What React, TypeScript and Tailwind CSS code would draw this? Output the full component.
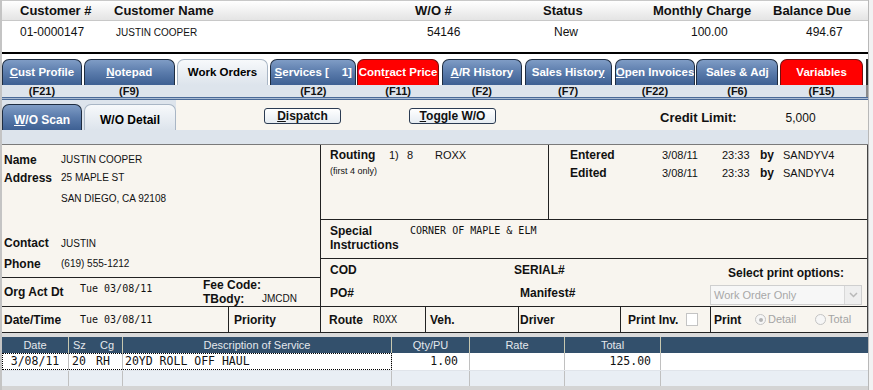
import React from 'react';

const blueTab = 'bg-linear-to-b from-[#7f9cc5] via-[#5a7bab] to-[#3e6093] border-[#1e2c40] text-white';
const redTab = 'bg-[#ff0000] border-[#701010] text-white';
const activeTab = 'bg-linear-to-b from-[#f7f9fb] to-[#dde4ec] border-[#a9b6c5] text-black';

const tabs = [
  { key: 'cust', label: <><u>C</u>ust Profile</>, f: '(F21)', pos: 'ml-0 w-[80px]', tone: blueTab },
  { key: 'note', label: <><u>N</u>otepad</>, f: '(F9)', pos: 'ml-[2px] w-[91px]', tone: blueTab },
  { key: 'wo', label: 'Work Orders', f: '', pos: 'ml-[2px] w-[92px]', tone: activeTab },
  { key: 'svc', label: <><u>S</u>ervices [&nbsp;&nbsp;&nbsp;&nbsp;1]</>, f: '(F12)', pos: 'ml-[2px] w-[86px]', tone: blueTab },
  { key: 'contract', label: <>Cont<u>r</u>act Price</>, f: '(F11)', pos: 'ml-px w-[82px]', tone: redTab },
  { key: 'ar', label: <><u>A</u>/R History</>, f: '(F2)', pos: 'ml-[3px] w-[80px]', tone: blueTab },
  { key: 'sh', label: <>Sales Histor<u>y</u></>, f: '(F7)', pos: 'ml-[3px] w-[87px]', tone: blueTab },
  { key: 'oi', label: <><u>O</u>pen Invoices</>, f: '(F22)', pos: 'ml-[3px] w-[81px]', tone: blueTab },
  { key: 'sa', label: <>Sales &amp; Ad<u>j</u></>, f: '(F6)', pos: 'ml-px w-[82px]', tone: blueTab },
  { key: 'var', label: 'Variables', f: '(F15)', pos: 'ml-[2px] w-[83px]', tone: redTab },
];

const mono = "font-['DejaVu_Sans_Mono',monospace]";

function Radio({ checked }: { checked?: boolean }) {
  return (
    <span className="w-[11px] h-[11px] rounded-full border border-[#c4c4c4] bg-[#f6f6f6] flex items-center justify-center">
      {checked && <span className="w-[4px] h-[4px] rounded-full bg-[#b4b4b4]" />}
    </span>
  );
}

export default function App() {
  return (
    <div className="w-[873px] h-[390px] overflow-hidden flex bg-white text-[#111] font-['Liberation_Sans',Arial,sans-serif]">
      <div className="w-[2px] bg-[#c4c4c4]" />
      <div className="w-[866px] flex flex-col">
        {/* customer header */}
        <div className="h-[21px] border-t border-b border-[#c8c8c8] bg-linear-to-b from-white to-[#e4e4e4] flex items-center pl-[18px] text-[13px] font-bold">
          <span className="w-[94px]">Customer #</span>
          <span className="w-[301px]">Customer Name</span>
          <span className="w-[128px]">W/O #</span>
          <span className="w-[110px]">Status</span>
          <span className="w-[120px]">Monthly Charge</span>
          <span>Balance Due</span>
        </div>
        <div className="h-[31px] pt-[4px] pl-[18px]">
          <div className="h-[14px] flex items-center text-[12px]">
            <span className="w-[96px]">01-0000147</span>
            <span className="w-[311px] text-[10px]">JUSTIN COOPER</span>
            <span className="w-[127px]">54146</span>
            <span className="w-[137px]">New</span>
            <span className="w-[115px]">100.00</span>
            <span>494.67</span>
          </div>
        </div>
        <div className="h-[2px] bg-black" />
        <div className="h-[5px]" />

        {/* main tabs */}
        <div className="h-[26px] flex">
          {tabs.map((t) => (
            <div
              key={t.key}
              className={`${t.pos} ${t.tone} border border-b-0 rounded-t-[7px] flex items-center justify-center text-[11.5px] font-bold whitespace-nowrap overflow-hidden`}
            >
              {t.label}
            </div>
          ))}
          <div className="ml-[3px] w-[2px] bg-[#2a2a2a]" />
        </div>
        <div className="h-[12px] flex bg-[#dde4ec]">
          {tabs.map((t) => (
            <div key={t.key} className={`${t.pos} flex items-center justify-center text-[11px] font-bold leading-[12px]`}>
              {t.f}
            </div>
          ))}
          <div className="ml-[3px] w-[2px] bg-[#8a8a8a]" />
        </div>
        <div className="h-px bg-[#4a6a98]" />
        <div className="h-px bg-[#a9bbd3]" />
        <div className="h-px bg-[#4a6a98]" />

        {/* sub tabs */}
        <div className="h-[30px] flex">
          <div className="w-[174px] bg-[#dde4ec] flex items-end">
            <div className={`w-[80px] h-[26px] ${blueTab} border border-b-0 rounded-t-[7px] flex items-center justify-center pt-[4px] text-[12px] font-bold`}>
              <span><u>W</u>/O Scan</span>
            </div>
            <div className={`ml-[2px] w-[92px] h-[26px] ${activeTab} border border-b-0 rounded-t-[7px] flex items-center justify-center pt-[4px] text-[12px] font-bold`}>
              W/O Detail
            </div>
          </div>
          <div className="flex-1 bg-[#f8f5ef] flex items-center pt-[2px] pl-[88px]">
            <button className="w-[77px] h-[16px] rounded-[3px] border border-[#2b3b52] bg-linear-to-b from-white to-[#e6ecf2] text-[12px] font-bold leading-none">
              <u>D</u>ispatch
            </button>
            <button className="ml-[68px] w-[87px] h-[16px] rounded-[3px] border border-[#2b3b52] bg-linear-to-b from-white to-[#e6ecf2] text-[12px] font-bold leading-none">
              <u>T</u>oggle W/O
            </button>
            <span className="ml-[164px] mt-[4px] text-[13px] font-bold">Credit Limit:</span>
            <span className="ml-[49px] mt-[4px] text-[12px]">5,000</span>
          </div>
        </div>
        <div className="h-[14px] bg-[#dde4ec]" />
        <div className="h-px bg-[#7a7a7a]" />

        {/* detail body */}
        <div className="bg-[#f8f5ef] border-r border-[#444]">
          <div className="h-[162px] border-b border-[#222] flex">
            <div className="w-[319px] border-r border-[#222] flex flex-col">
              <div className="h-[133px] border-b border-[#222] pl-[2px] pt-[6px] flex flex-col">
                <div className="h-[17px] flex items-center">
                  <span className="w-[57px] text-[12px] font-bold">Name</span>
                  <span className="text-[10px]">JUSTIN COOPER</span>
                </div>
                <div className="h-[19px] flex items-center">
                  <span className="w-[57px] text-[12px] font-bold">Address</span>
                  <span className="text-[10px]">25 MAPLE ST</span>
                </div>
                <div className="h-[23px] flex items-center pl-[57px] text-[10px]">SAN DIEGO, CA 92108</div>
                <div className="h-[23px]" />
                <div className="h-[20px] flex items-center">
                  <span className="w-[57px] text-[12px] font-bold">Contact</span>
                  <span className="text-[10px]">JUSTIN</span>
                </div>
                <div className="h-[21px] flex items-center">
                  <span className="w-[57px] text-[12px] font-bold">Phone</span>
                  <span className="text-[10px]">(619) 555-1212</span>
                </div>
              </div>
              <div className="flex-1 flex items-start pl-[2px] leading-[14px]">
                <span className="w-[76px] mt-[7px] text-[12px] font-bold">Org Act Dt</span>
                <span className={`w-[123px] mt-[4px] text-[10px] ${mono}`}>Tue 03/08/11</span>
                <div className="flex flex-col text-[12px] font-bold">
                  <span>Fee Code:</span>
                  <span className="flex items-center">
                    <span className="w-[59px]">TBody:</span>
                    <span className="text-[10px] font-normal">JMCDN</span>
                  </span>
                </div>
              </div>
            </div>

            <div className="flex-1 flex flex-col">
              <div className="h-[75px] border-b border-[#222] flex">
                <div className="w-[228px] border-r border-[#222] pl-[9px] pt-[3px] flex flex-col">
                  <div className="h-[14px] flex items-center text-[11px]">
                    <span className="w-[59px] text-[12px] font-bold">Routing</span>
                    <span className="w-[18px]">1)</span>
                    <span className="w-[28px]">8</span>
                    <span>ROXX</span>
                  </div>
                  <div className="mt-[4px] h-[12px] flex items-center text-[9px]">(first 4 only)</div>
                </div>
                <div className="flex-1 pl-[21px] pt-[3px] flex flex-col text-[11px]">
                  <div className="h-[14px] flex items-center">
                    <span className="w-[92px] text-[12px] font-bold">Entered</span>
                    <span className="w-[60px]">3/08/11</span>
                    <span className="w-[38px]">23:33</span>
                    <span className="w-[23px] text-[12px] font-bold">by</span>
                    <span>SANDYV4</span>
                  </div>
                  <div className="mt-[4px] h-[14px] flex items-center">
                    <span className="w-[92px] text-[12px] font-bold">Edited</span>
                    <span className="w-[60px]">3/08/11</span>
                    <span className="w-[38px]">23:33</span>
                    <span className="w-[23px] text-[12px] font-bold">by</span>
                    <span>SANDYV4</span>
                  </div>
                </div>
              </div>
              <div className="h-[39px] border-b border-[#222] flex pl-[9px] pt-[4px] leading-[14px]">
                <div className="w-[80px] flex flex-col text-[12px] font-bold">
                  <span>Special</span>
                  <span>Instructions</span>
                </div>
                <span className={`text-[10px] ${mono}`}>CORNER OF MAPLE &amp; ELM</span>
              </div>
              <div className="flex-1 flex">
                <div className="w-[389px] pl-[9px] pt-[4px] flex flex-col text-[12px] font-bold">
                  <div className="h-[14px] flex items-center">
                    <span className="w-[184px]">COD</span>
                    <span>SERIAL#</span>
                  </div>
                  <div className="mt-[9px] h-[14px] flex items-center">
                    <span className="w-[190px]">PO#</span>
                    <span>Manifest#</span>
                  </div>
                </div>
                <div className="flex-1 flex flex-col pt-[7px]">
                  <div className="h-[14px] pl-[18px] flex items-center text-[12px] font-bold">Select print options:</div>
                  <div className="mt-[5px] w-[152px] h-[20px] border border-[#cfcfcf] bg-[#f7f7f7] flex">
                    <span className="flex-1 pl-[3px] flex items-center text-[11px] text-[#a8a8a8]">Work Order Only</span>
                    <span className="w-[17px] border-l border-[#d8d8d8] bg-[#eeeeee] flex items-center justify-center">
                      <svg width="9" height="6" viewBox="0 0 9 6">
                        <path d="M1 1l3.5 3.5L8 1" stroke="#b8b8b8" strokeWidth="1.5" fill="none" />
                      </svg>
                    </span>
                  </div>
                </div>
              </div>
            </div>
          </div>

          <div className="h-[26px] border-b border-[#222] flex text-[12px]">
            <div className="w-[227px] border-r border-[#222] pl-[2px] flex items-center">
              <span className="w-[76px] font-bold">Date/Time</span>
              <span className={`text-[10px] ${mono}`}>Tue 03/08/11</span>
            </div>
            <div className="w-[92px] border-r border-[#222] pl-[5px] flex items-center font-bold">Priority</div>
            <div className="w-[105px] border-r border-[#222] pl-[8px] flex items-center">
              <span className="w-[44px] font-bold">Route</span>
              <span className={`text-[10px] ${mono}`}>ROXX</span>
            </div>
            <div className="w-[93px] border-r border-[#222] pl-[4px] flex items-center font-bold">Veh.</div>
            <div className="w-[102px] border-r border-[#222] pl-px flex items-center font-bold">Driver</div>
            <div className="w-[90px] border-r border-[#222] pl-[7px] flex items-center">
              <span className="w-[58px] font-bold">Print Inv.</span>
              <span className="w-[12px] h-[13px] border border-[#c4c4c4] bg-white" />
            </div>
            <div className="flex-1 pl-[3px] flex items-center text-[11px] text-[#a4a4a4]">
              <span className="w-[41px] text-[12px] font-bold text-[#111]">Print</span>
              <span className="w-[60px] flex items-center gap-[2px]">
                <Radio checked />
                Detail
              </span>
              <span className="flex items-center gap-[2px]">
                <Radio />
                Total
              </span>
            </div>
          </div>
        </div>
        <div className="h-[4px] bg-[#dadada]" />

        {/* service grid */}
        <div className="h-[16px] bg-[#33506c] border-r border-[#33506c] flex text-[11px] text-[#e4e8ec] leading-[16px]">
          <div className="w-[67px] border-r border-[#c8c8b0] text-center">Date</div>
          <div className="w-[54px] border-r border-[#c8c8b0] pl-[4px] flex">
            <span className="w-[27px]">Sz</span>
            <span>Cg</span>
          </div>
          <div className="w-[269px] border-r border-[#c8c8b0] text-center">Description of Service</div>
          <div className="w-[78px] border-r border-[#c8c8b0] text-center">Qty/PU</div>
          <div className="w-[95px] border-r border-[#c8c8b0] text-center">Rate</div>
          <div className="w-[96px] border-r border-[#c8c8b0] text-center">Total</div>
          <div className="flex-1" />
        </div>
        <div className={`h-[17px] bg-white flex text-[11.5px] leading-[17px] ${mono}`}>
          <div className="flex outline-1 outline-dotted outline-black -outline-offset-1">
            <div className="w-[67px] border-r border-[#c0c0c0] text-center">3/08/11</div>
            <div className="w-[54px] border-r border-[#c0c0c0] pl-[3px] flex">
              <span className="w-[24px]">20</span>
              <span>RH</span>
            </div>
            <div className="w-[269px] border-r border-[#c0c0c0] pl-[2px]">20YD ROLL OFF HAUL</div>
          </div>
          <div className="w-[78px] border-r border-[#c0c0c0] text-right pr-[11px]">1.00</div>
          <div className="w-[95px] border-r border-[#c0c0c0]" />
          <div className="w-[96px] border-r border-[#c0c0c0] text-right pr-[9px]">125.00</div>
          <div className="flex-1" />
        </div>
        <div className="h-[16px] bg-[#e9eef4] flex border-t border-[#e0e4ea]">
          <div className="w-[67px] border-r border-[#c0c0c0]" />
          <div className="w-[54px] border-r border-[#c0c0c0]" />
          <div className="w-[269px] border-r border-[#c0c0c0]" />
          <div className="w-[78px] border-r border-[#c0c0c0]" />
          <div className="w-[95px] border-r border-[#c0c0c0]" />
          <div className="w-[96px] border-r border-[#c0c0c0]" />
          <div className="flex-1" />
        </div>
        <div className="flex-1 bg-[#d4d4d4]" />
      </div>
      <div className="flex-1 bg-[#f2f2f2] border-l border-[#b8b8b8]" />
    </div>
  );
}
